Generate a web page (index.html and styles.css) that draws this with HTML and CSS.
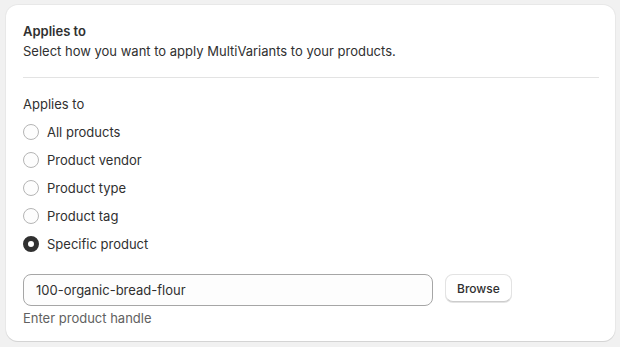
FILE: index.html
```html
<!DOCTYPE html>
<html lang="en">
<head>
  <meta charset="UTF-8">
  <title>Applies to</title>
  <link rel="stylesheet" href="styles.css">
</head>
<body>
  <div class="card">
    <div class="card-header">
      <h2>Applies to</h2>
      <p>Select how you want to apply MultiVariants to your products.</p>
    </div>

    <div class="card-section">
      <div class="group-label">Applies to</div>
      <ul class="choice-list">
        <li><span class="radio"></span>All products</li>
        <li><span class="radio"></span>Product vendor</li>
        <li><span class="radio"></span>Product type</li>
        <li><span class="radio"></span>Product tag</li>
        <li><span class="radio checked"></span>Specific product</li>
      </ul>

      <div class="field-row">
        <div class="text-field">100-organic-bread-flour</div>
        <button class="browse-btn">Browse</button>
      </div>
      <div class="help-text">Enter product handle</div>
    </div>
  </div>
</body>
</html>
```

FILE: styles.css
```css
body {
  margin: 0;
  padding: 5px 5px 5px 6px;
  background-color: #f1f1f1;
  font-family: Inter, "Noto Sans", sans-serif;
  font-size: 13px;
  line-height: 20px;
  color: #303030;
}
.card {
  background-color: #ffffff;
  border-radius: 12px;
  box-shadow: 0 1px 0 #d4d4d4, 0 0 0 1px #e8e8e8;
  padding: 16px 16px 13px 17px;
}
.card-header {
  padding-bottom: 16px;
  border-bottom: 1px solid #e3e3e3;
}
.card-header h2 {
  margin: 0;
  font-size: 13px;
  font-weight: 600;
}
.card-header p {
  margin: 0;
}
.card-section {
  padding-top: 16px;
}
.group-label {
  margin-bottom: 4px;
}
.choice-list {
  list-style: none;
  margin: 0;
  padding: 0;
}
.choice-list li {
  display: flex;
  align-items: center;
  gap: 8px;
  height: 28px;
}
.radio {
  width: 16px;
  height: 16px;
  box-sizing: border-box;
  border: 1px solid #b5b5b5;
  border-radius: 50%;
  background-color: #fdfdfd;
}
.radio.checked {
  border: 5px solid #303030;
  background-color: #ffffff;
}
.field-row {
  display: flex;
  align-items: flex-start;
  gap: 12px;
  margin-top: 16px;
}
.text-field {
  width: 410px;
  height: 32px;
  box-sizing: border-box;
  padding: 5px 12px;
  border: 1px solid #a6a6a6;
  border-radius: 8px;
  background-color: #fdfdfd;
}
.browse-btn {
  height: 28px;
  padding: 0 11px;
  font-family: inherit;
  font-size: 12px;
  font-weight: 500;
  color: #303030;
  background-color: #ffffff;
  border: 1px solid #e3e3e3;
  border-bottom-color: #cccccc;
  border-radius: 8px;
  box-shadow: 0 1px 0 #e3e3e3;
}
.help-text {
  margin-top: 2px;
  color: #616161;
}
```
